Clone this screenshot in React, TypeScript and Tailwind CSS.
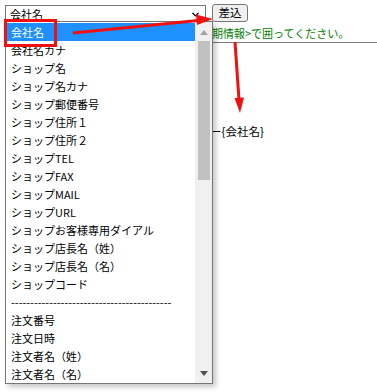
import { ChevronDown } from 'lucide-react';

const items = [
  '会社名',
  '会社名カナ',
  'ショップ名',
  'ショップ名カナ',
  'ショップ郵便番号',
  'ショップ住所１',
  'ショップ住所２',
  'ショップTEL',
  'ショップFAX',
  'ショップMAIL',
  'ショップURL',
  'ショップお客様専用ダイアル',
  'ショップ店長名（姓）',
  'ショップ店長名（名）',
  'ショップコード',
  '------------------------------------------',
  '注文番号',
  '注文日時',
  '注文者名（姓）',
  '注文者名（名）',
];

const font = { fontFamily: '"Noto Sans CJK JP", "Noto Sans", sans-serif' };

export default function App() {
  return (
    <div className="relative w-[377px] h-[392px] bg-white overflow-hidden text-black" style={font}>
      {/* ページ本体 */}
      <div className="pt-[4px] pl-[5px]">
        <div className="flex items-start">
          <div className="w-[201px] h-[18px] mt-[1px] border border-[#767676] bg-white flex items-center justify-between pl-[4px] pr-[4px]">
            <span className="text-[11px] leading-none">会社名</span>
            <ChevronDown className="w-[11px] h-[11px]" strokeWidth={3} />
          </div>
          <button className="ml-[6px] w-[36px] h-[18px] border border-[#767676] rounded-[3px] bg-[#efefef] text-[11.5px] leading-none">
            差込
          </button>
        </div>
        <div className="pl-[207px] mt-[3px] h-[14px] text-[11px] leading-[14px] text-[#008000] whitespace-nowrap">
          期情報&gt;で囲ってください。
        </div>
        <div className="mt-[2px] h-[360px] border-t border-[#7a7a7a] pl-[205px] pt-[81px]">
          <div className="text-[11.5px] leading-[14px] whitespace-nowrap">ー{'{'}会社名{'}'}</div>
        </div>
      </div>

      {/* ドロップダウン */}
      <div className="absolute left-[5px] top-[21px] w-[208px] h-[363px] border border-[#767676] bg-white flex shadow-[3px_3px_5px_rgba(0,0,0,0.22)]">
        <div className="flex-1 pt-[1px] pl-[1px]">
          {items.map((item, i) => (
            <div
              key={i}
              className={`h-[18px] pl-[4px] flex items-center text-[11px] whitespace-nowrap overflow-hidden ${
                i === 0 ? 'bg-[#1e90ff] text-white' : ''
              }`}
            >
              {item}
            </div>
          ))}
        </div>
        <div className="w-[17px] bg-[#f0f0f0] flex flex-col items-center">
          <svg className="mt-[8px]" width="8" height="5" viewBox="0 0 8 5">
            <path d="M0 5 L4 0 L8 5 Z" fill="#a3a3a3" />
          </svg>
          <div className="mt-[6px] w-[12px] h-[139px] bg-[#c1c1c1]" />
          <div className="flex-1" />
          <svg className="mb-[7px]" width="8" height="5" viewBox="0 0 8 5">
            <path d="M0 0 L8 0 L4 5 Z" fill="#505050" />
          </svg>
        </div>
      </div>

      {/* 赤枠と矢印 */}
      <div className="absolute left-[4px] top-[19px] w-[53px] h-[28px] border-[3px] border-[#f01010]" />
      <svg className="absolute left-0 top-0" width="377" height="392" viewBox="0 0 377 392">
        <line x1="73" y1="33" x2="198" y2="20.5" stroke="#f01010" strokeWidth="3" />
        <path d="M213 19 L196 14.5 L197 25 Z" fill="#f01010" />
        <line x1="235" y1="42" x2="239" y2="100" stroke="#f01010" strokeWidth="3" />
        <path d="M240 113 L234.5 98 L244 97.5 Z" fill="#f01010" />
      </svg>
    </div>
  );
}
